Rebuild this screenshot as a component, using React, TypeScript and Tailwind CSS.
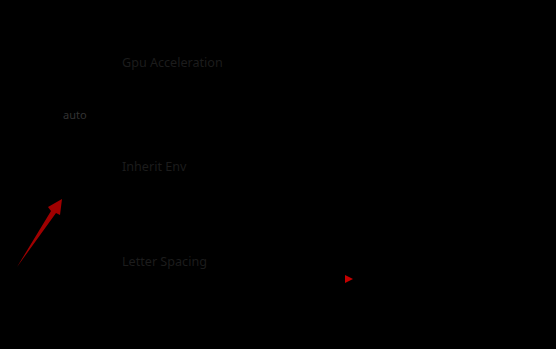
const rows = ["Gpu Acceleration", "Inherit Env", "Letter Spacing"];

const App = () => {
  return (
    <div className="relative w-[556px] h-[349px] bg-black overflow-hidden flex font-['Noto_Sans',sans-serif]">
      <div className="w-[122px] shrink-0 pt-[108px] pl-[63px]">
        <div className="text-[11px] leading-[14px] text-[#333333]">auto</div>
      </div>
      <div className="flex flex-col pt-[54px]">
        <div className="h-[104px] text-[12.6px] leading-[18px] text-[#1c1c1c]">{rows[0]}</div>
        <div className="h-[95px] text-[12.6px] leading-[18px] text-[#1c1c1c]">{rows[1]}</div>
        <div className="text-[12.6px] leading-[18px] text-[#1c1c1c]">{rows[2]}</div>
      </div>
      <svg className="absolute left-0 top-0 pointer-events-none" width="556" height="349" viewBox="0 0 556 349">
        <path d="M17 267 L51 211 L48 207 L62 199 L60 215 L56 213 Z" fill="#a00000" />
        <path d="M345 275 L353 279 L345 283 Z" fill="#c40000" />
      </svg>
    </div>
  );
};

export default App;
